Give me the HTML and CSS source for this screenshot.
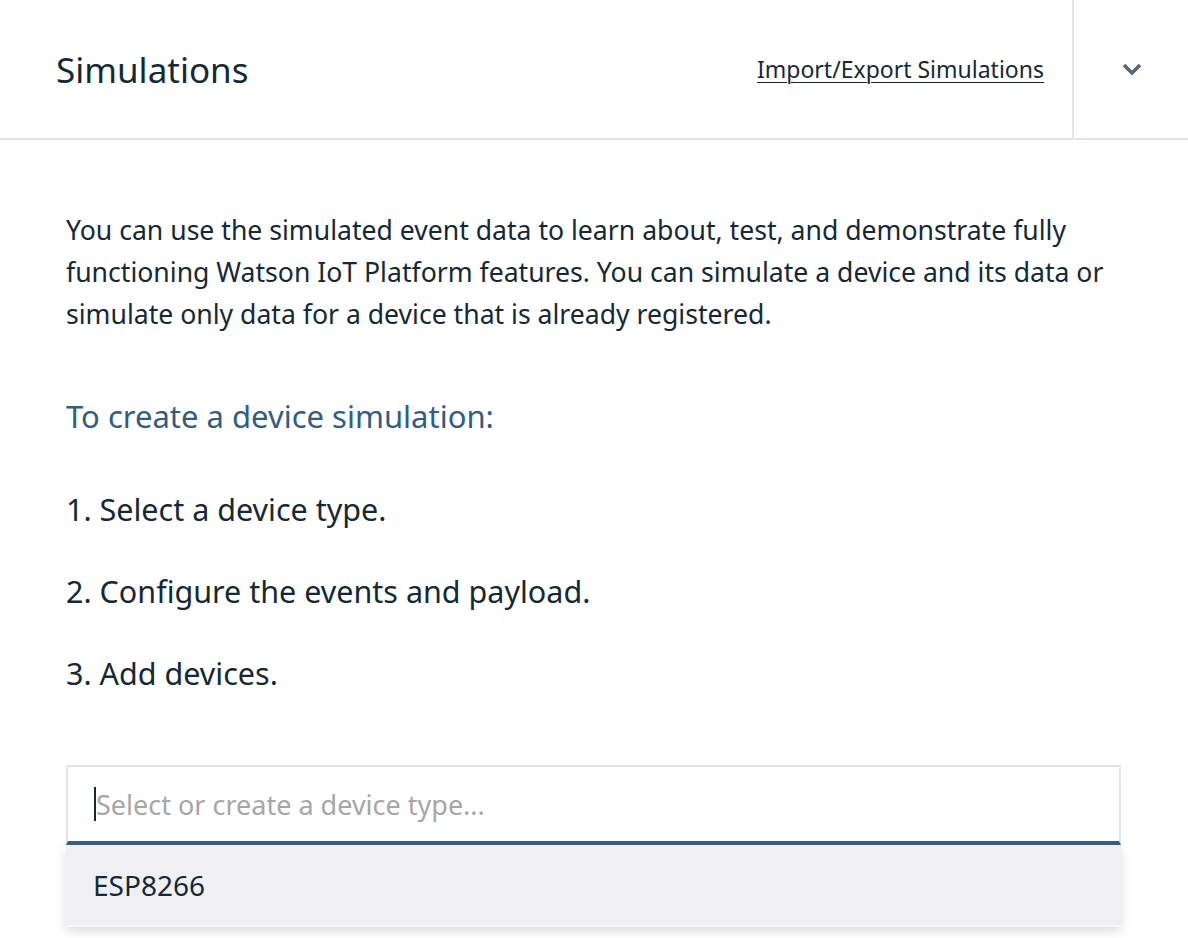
FILE: index.html
```html
<!DOCTYPE html>
<html lang="en">
<head>
<meta charset="utf-8">
<title>Simulations</title>
<link rel="stylesheet" href="styles.css">
</head>
<body>
<div class="panel">
  <header class="panel-header">
    <h1 class="panel-title">Simulations</h1>
    <a class="panel-link" href="#">Import/Export Simulations</a>
    <button class="panel-toggle" aria-label="Collapse">
      <svg width="20" height="14" viewBox="0 0 20 14"><polyline points="2,3 10,11 18,3" fill="none" stroke="#5a6872" stroke-width="3.6"/></svg>
    </button>
  </header>
  <main class="panel-body">
    <p class="intro">You can use the simulated event data to learn about, test, and demonstrate fully functioning Watson IoT Platform features. You can simulate a device and its data or simulate only data for a device that is already registered.</p>
    <h2 class="steps-title">To create a device simulation:</h2>
    <ol class="steps">
      <li>1. Select a device type.</li>
      <li>2. Configure the events and payload.</li>
      <li>3. Add devices.</li>
    </ol>
    <div class="combo">
      <div class="combo-input"><span class="caret"></span><span class="placeholder">Select or create a device type...</span></div>
      <ul class="combo-list">
        <li class="combo-option">ESP8266</li>
      </ul>
    </div>
  </main>
</div>
</body>
</html>
```
FILE: styles.css
```css
html, body {
  margin: 0;
  padding: 0;
  background: #ffffff;
}
body {
  font-family: "Noto Sans", "Open Sans", sans-serif;
  color: #152935;
  width: 1188px;
  height: 938px;
  overflow: hidden;
}
.panel-header {
  display: flex;
  align-items: center;
  height: 138px;
  border-bottom: 2px solid #dfe6eb;
}
.panel-title {
  flex: 1;
  margin: 0 0 0 56px;
  font-size: 35px;
  font-weight: 400;
  color: #152935;
}
.panel-link {
  font-size: 23px;
  color: #152935;
  text-decoration: underline;
  text-underline-offset: 4px;
  text-decoration-thickness: 1px;
  margin-right: 28px;
}
.panel-toggle {
  width: 116px;
  height: 138px;
  border: 0;
  border-left: 2px solid #dfe6eb;
  background: transparent;
  padding: 0;
  display: flex;
  align-items: center;
  justify-content: center;
}
.panel-toggle svg {
  display: block;
  margin-left: 2px;
}
.panel-body {
  padding: 69px 66px 0 66px;
}
.intro {
  margin: 0;
  font-size: 26.6px;
  line-height: 42px;
  width: 1056px;
}
.steps-title {
  margin: 57px 0 0 0;
  font-size: 31px;
  line-height: 48px;
  font-weight: 400;
  color: #325c80;
}
.steps {
  list-style: none;
  margin: 48px 0 0 0;
  padding: 0;
  display: flex;
  flex-direction: column;
  gap: 40px;
  font-size: 30.5px;
  line-height: 42px;
}
.combo {
  margin-top: 71px;
  width: 1055px;
}
.combo-input {
  display: flex;
  align-items: center;
  height: 74px;
  border: 2px solid #dfe6eb;
  border-bottom: 4px solid #3d5f7f;
  padding-left: 26px;
  background: #fff;
}
.caret {
  width: 2px;
  height: 34px;
  background: #152935;
}
.placeholder {
  font-size: 27px;
  color: #a6a6a6;
}
.combo-list {
  list-style: none;
  margin: 0;
  padding: 0;
  background: #efeff4;
  border-bottom: 2px solid #f7f7f9;
  box-shadow: 0 4px 10px rgba(0, 0, 0, 0.14);
}
.combo-option {
  height: 80px;
  display: flex;
  align-items: center;
  padding-left: 27px;
  font-size: 28px;
  color: #152935;
}
```
